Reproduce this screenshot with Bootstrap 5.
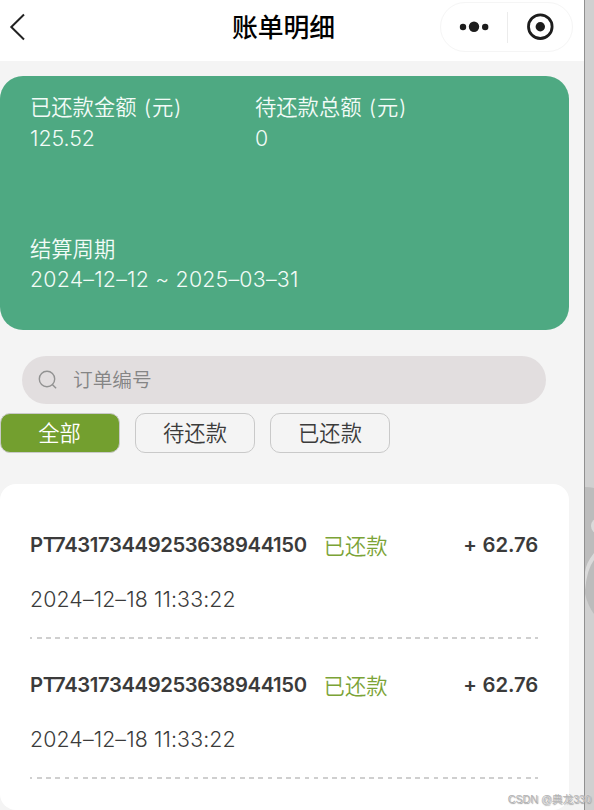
<!DOCTYPE html>
<html lang="zh-CN">
<head>
<meta charset="utf-8">
<meta name="viewport" content="width=device-width, initial-scale=1">
<title>账单明细</title>
<link href="https://cdn.jsdelivr.net/npm/bootstrap@5.3.0/dist/css/bootstrap.min.css" rel="stylesheet">
<style>
body{font-family:Inter,"Noto Sans CJK SC",sans-serif;font-size:21.3px;font-weight:350;line-height:31px;color:#3b3b3b;background:#fff;width:594px;height:810px}
.phone{width:584px;height:810px;background:#f4f4f4}
.desk{width:10px;height:810px;background:#d0d0d0;border-left:1px solid #909090}
.topbar{height:61px;background:#fff;padding-left:9px;padding-right:11px;padding-bottom:7px}
.title{font-size:25.8px;font-weight:500;color:#000;margin:2px 15px 0 0;line-height:36px}
.capsule{width:133px;height:50px;border:1px solid #f5f5f5}
.capsule-line{width:1px;height:31px;background:#ececec}
.summary{width:569px;height:254px;margin-top:15px;border-radius:23px;background:#4ea982;color:#f2fbf7;padding:16px 30px 34px}
.sum-col{width:225px}
.sum-label{word-spacing:1.3px}
.unit{letter-spacing:.8px}
.range{letter-spacing:.24px;margin-top:-1px;margin-bottom:1px}
.search{width:524px;height:48px;margin:26px 0 0 22px;background:#e2dedf;color:#858585;font-size:19.7px;padding-left:16px;gap:16px}
.search-hint{padding-top:1px}
.tabs-row{gap:15px;margin-top:9px}
.tab-btn{width:120px;height:40px;padding:1px 0 0;font-size:21.3px;font-weight:350;line-height:37px;color:#3b3b3b;border:1.5px solid #c9c9c9;border-radius:10px}
.tab-btn.chosen{background:#739f2f;color:#fff;width:120px;padding-right:1px}
.bills{width:569px;height:326px;margin-top:31px;border-radius:16px;background:#fff;padding:15px 31px 0 30px}
.bill{height:140px;padding-top:31px}
.bill-id{font-weight:600;font-size:20.3px;letter-spacing:-.4px;margin-top:-2px}
.amount{letter-spacing:-.12px;word-spacing:.8px}
.bill-state{color:#7ba336;margin-left:17px;padding-top:1px;margin-bottom:-1px}
.bill-date{margin-top:23px;letter-spacing:.13px}
.dash{height:2px;margin-top:22px;background:repeating-linear-gradient(90deg,#cfcfcf 0 4.7px,transparent 4.7px 9.23px) -2.4px 0/520px 2px no-repeat}
.credit{right:3px;bottom:1px;font-family:"Liberation Sans","Noto Sans CJK SC",sans-serif;font-size:10.7px;font-weight:400;line-height:20px;color:#b0b0b0;text-shadow:0 0 1px #fff,1px 1px 1px #999}
</style>
<script src="https://cdn.jsdelivr.net/npm/bootstrap@5.3.0/dist/js/bootstrap.bundle.min.js"></script>
</head>
<body class="d-flex overflow-hidden position-relative">
<main class="phone flex-shrink-0">
  <header class="topbar d-flex align-items-center justify-content-between">
    <svg width="133" height="28" viewBox="0 0 133 28" fill="none" stroke="#222" stroke-width="2"><path d="M15 1.500 2.300 14 15 26.500"/></svg>
    <h1 class="title">账单明细</h1>
    <div class="capsule rounded-pill d-flex align-items-center">
      <svg width="66" height="48" viewBox="0 0 66 48" fill="#1c1c1c"><circle cx="22" cy="24" r="3.200"/><circle cx="33" cy="23.700" r="5.200"/><circle cx="44.200" cy="24" r="3.200"/></svg>
      <div class="capsule-line"></div>
      <svg width="64" height="48" viewBox="0 0 64 48" fill="#1c1c1c"><circle cx="32.300" cy="23.700" r="11.800" fill="none" stroke="#1c1c1c" stroke-width="2.800"/><circle cx="32.300" cy="23.700" r="4.700"/></svg>
    </div>
  </header>
  <section class="summary d-flex flex-column justify-content-between">
    <div class="d-flex">
      <div class="sum-col"><div class="sum-label">已还款金额 <span class="unit">(元)</span></div><div class="num">125.52</div></div>
      <div class="sum-col"><div class="sum-label">待还款总额 <span class="unit">(元)</span></div><div class="num">0</div></div>
    </div>
    <div><div>结算周期</div><div class="num range">2024–12–12 ~ 2025–03–31</div></div>
  </section>
  <div class="search rounded-pill d-flex align-items-center">
    <svg width="19" height="20" viewBox="0 0 19 20" fill="none" stroke="#929292" stroke-width="1.400"><circle cx="9" cy="9" r="7.700"/><path d="m14.300 14.500 3.800 3.800"/></svg>
    <span class="search-hint">订单编号</span>
  </div>
  <div class="tabs-row d-flex">
    <button class="btn tab-btn chosen">全部</button>
    <button class="btn tab-btn">待还款</button>
    <button class="btn tab-btn">已还款</button>
  </div>
  <section class="bills">
    <article class="bill">
      <div class="d-flex align-items-center"><span class="bill-id">PT743173449253638944150</span><span class="bill-state">已还款</span><span class="bill-id amount ms-auto">+ 62.76</span></div>
      <div class="bill-date">2024–12–18 11:33:22</div>
      <div class="dash"></div>
    </article>
    <article class="bill">
      <div class="d-flex align-items-center"><span class="bill-id">PT743173449253638944150</span><span class="bill-state">已还款</span><span class="bill-id amount ms-auto">+ 62.76</span></div>
      <div class="bill-date">2024–12–18 11:33:22</div>
      <div class="dash"></div>
    </article>
  </section>
</main>
<aside class="desk flex-shrink-0">
  <svg class="d-block" width="9" height="810" viewBox="0 0 9 810"><path d="M0 487Q5 487 9 488V614Q3 606 0 594Z" fill="#bcbcbc"/><circle cx="14" cy="526" r="8" fill="#dadada"/><path d="M9 553Q1 563 0 572V590Q2 569 9 560Z" fill="#dadada"/></svg>
</aside>
<div class="credit position-absolute text-nowrap">CSDN @典龙330</div>
</body>
</html>
